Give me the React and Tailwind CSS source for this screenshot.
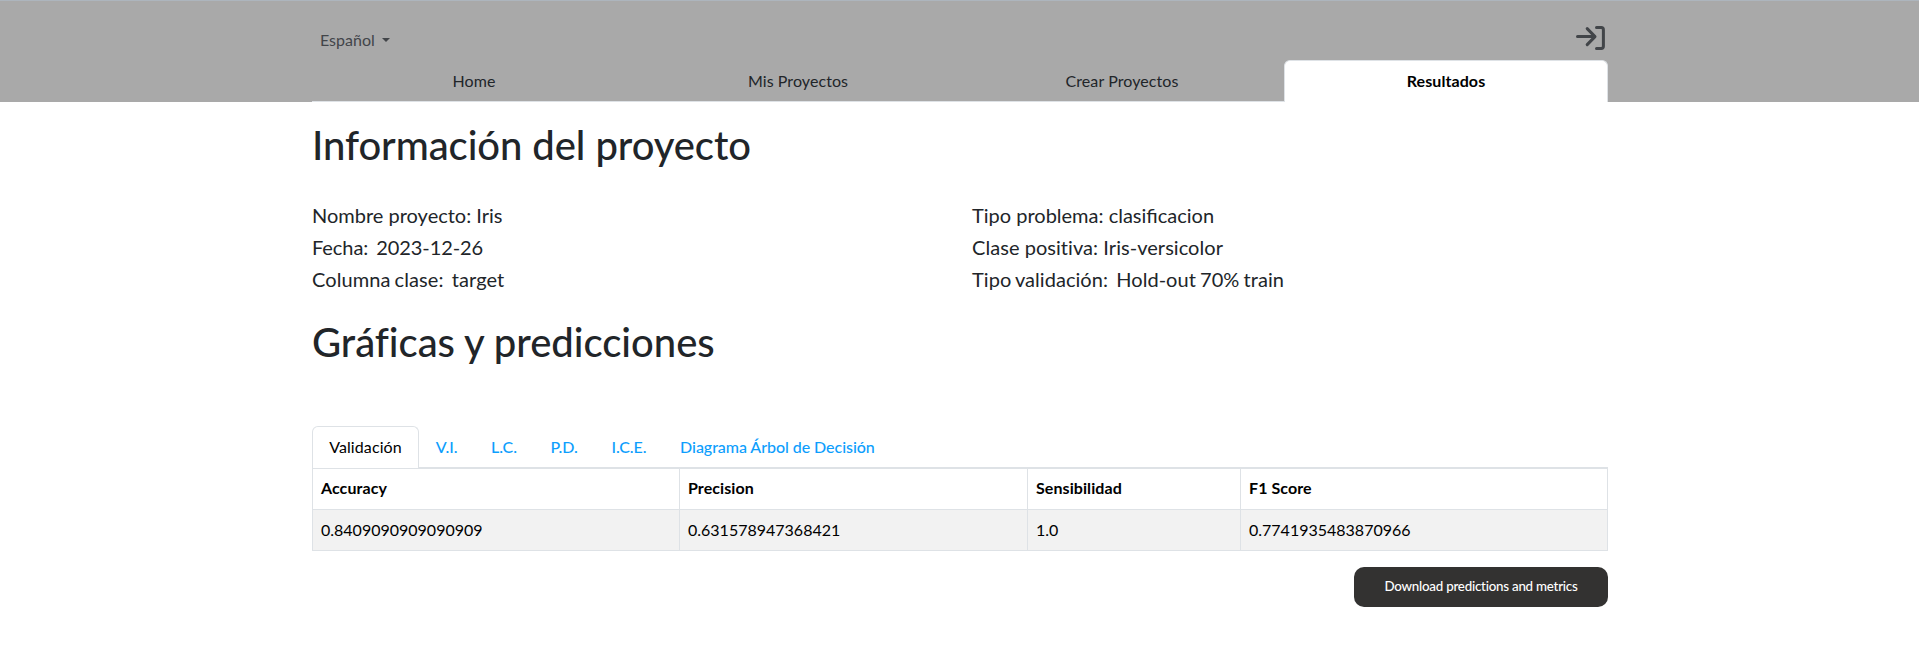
import React from "react";

const navItems = ["Home", "Mis Proyectos", "Crear Proyectos"];
const chartTabs = ["V.I.", "L.C.", "P.D.", "I.C.E.", "Diagrama Árbol de Decisión"];

function LoginIcon() {
  return (
    <svg className="mr-[3px]" width="29" height="24" viewBox="0 0 29 24" fill="none" stroke="#424549" strokeWidth="3" strokeLinecap="round" strokeLinejoin="round">
      <path d="M1.5 10.6H18.8M11.2 2.6L19 10.6L11.2 18.6" />
      <path d="M20.5 1.5H25.2Q27.4 1.5 27.4 3.7V20.3Q27.4 22.5 25.2 22.5H20.5" />
    </svg>
  );
}

function Header() {
  return (
    <header className="h-[102px] border-t border-[#adb5bd] bg-[#a9a9a9]">
      <div className="ml-[312px] flex h-[101px] w-[1296px] flex-col justify-between">
        <div className="flex h-[59px] items-start justify-between pt-[25px]">
          <button className="ml-2 flex items-center text-[#424549]">
            <span className="leading-7">Español</span>
            <span className="ml-[7px] border-x-[4px] border-t-[4px] border-x-transparent border-t-[#424549]" />
          </button>
          <LoginIcon />
        </div>
        <nav className="grid h-[42px] grid-cols-4 text-center leading-6">
          {navItems.map((item) => (
            <a key={item} className="border-b border-[#dee2e6] pt-[9px] tracking-[0.08px]">{item}</a>
          ))}
          <a className="rounded-t-[6px] border border-b-0 border-[#dee2e6] bg-white pt-2 font-bold tracking-[0.08px] text-black">Resultados</a>
        </nav>
      </div>
    </header>
  );
}

export default function App() {
  return (
    <div className="min-h-[656px] bg-white font-['Lato',sans-serif] text-base text-[#212529]">
      <Header />
      <main className="ml-[312px] w-[1296px]">
        <h1 className="pt-[19px] text-[40px] leading-[48px] font-medium tracking-[-0.07px]">Información del proyecto</h1>
        <section className="mt-[30px] grid grid-cols-[660px_1fr] text-[20px] leading-8 whitespace-pre">
          <div>
            <p>Nombre proyecto: Iris</p>
            <p className="tracking-[-0.08px] [word-spacing:-1px]">{"Fecha:  2023-12-26"}</p>
            <p className="tracking-[0.07px] [word-spacing:-1px]">{"Columna clase:  target"}</p>
          </div>
          <div>
            <p>Tipo problema: clasificacion</p>
            <p className="tracking-[0.05px]">Clase positiva: Iris-versicolor</p>
            <p className="tracking-[0.04px] [word-spacing:-1px]">{"Tipo validación:  Hold-out 70% train"}</p>
          </div>
        </section>
        <h1 className="mt-[23px] text-[40px] leading-[48px] font-medium tracking-[-0.03px]">Gráficas y predicciones</h1>
        <div className="mt-[60px] flex h-[42px] border-b border-[#dee2e6] leading-6">
          <a className="-mb-px w-[107px] rounded-t-[6px] border border-b-0 border-[#dee2e6] bg-white pt-2 text-center tracking-[0.1px] text-black">Validación</a>
          {chartTabs.map((tab) => (
            <a key={tab} className="px-[16.8px] pt-[9px] font-medium tracking-[-0.05px] text-[#0d9efd]">{tab}</a>
          ))}
        </div>
        <table className="w-full table-fixed border-collapse text-left leading-6 text-black">
          <colgroup>
            <col className="w-[367px]" />
            <col className="w-[348px]" />
            <col className="w-[213px]" />
            <col />
          </colgroup>
          <thead>
            <tr>
              {["Accuracy", "Precision", "Sensibilidad", "F1 Score"].map((label) => (
                <th key={label} className="border border-[#dee2e6] px-2 pt-[7px] pb-[9px] font-bold tracking-[0.08px]">{label}</th>
              ))}
            </tr>
          </thead>
          <tbody>
            <tr className="bg-[#f2f2f2]">
              {["0.8409090909090909", "0.631578947368421", "1.0", "0.7741935483870966"].map((value) => (
                <td key={value} className="border border-[#dee2e6] p-2">{value}</td>
              ))}
            </tr>
          </tbody>
        </table>
        <div className="mt-4 flex justify-end">
          <button className="h-10 w-[254px] rounded-[10px] bg-[#333231] text-[13.333px] font-medium tracking-[-0.23px] text-white">Download predictions and metrics</button>
        </div>
      </main>
    </div>
  );
}
